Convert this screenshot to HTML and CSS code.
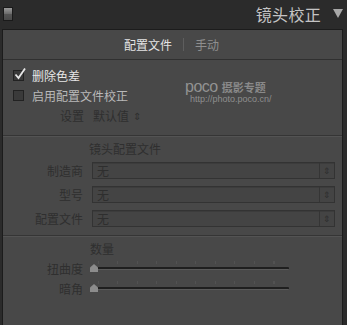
FILE: index.html
```html
<!DOCTYPE html>
<html>
<head>
<meta charset="utf-8">
<link rel="stylesheet" href="styles.css">
</head>
<body>
<div class="header">
  <div class="hicon"></div>
  <div class="htitle">镜头校正</div>
  <svg class="tri" width="10" height="9" viewBox="0 0 10 9"><polygon points="0,0 10,0 5,9" fill="#a8a8a8"/></svg>
</div>
<div class="panel">
  <div class="tabs">
    <span class="tab active">配置文件</span>
    <span class="tsep"></span>
    <span class="tab">手动</span>
  </div>
  <div class="sect1">
    <div class="chk"><span class="box"><svg width="12" height="12" viewBox="0 0 12 12"><path d="M1.5 6.5 L4.5 10 L11 0.5" fill="none" stroke="#e6e6e6" stroke-width="1.8"/></svg></span><span class="ctext on">删除色差</span></div>
    <div class="chk"><span class="box"></span><span class="ctext">启用配置文件校正</span></div>
    <div class="setting"><span class="dim">设置</span><span class="dim val">默认值</span><span class="arr">⇕</span></div>
    <div class="wm"><div class="wmtop"><span class="poco">poco</span><span class="wmcn">摄影专题</span></div><div class="url">http://photo.poco.cn/</div></div>
  </div>
  <div class="sect2">
    <div class="shead">镜头配置文件</div>
    <div class="frow"><span class="flabel">制造商</span><div class="sel"><span class="sv">无</span><span class="sarr">⇕</span></div></div>
    <div class="frow"><span class="flabel">型号</span><div class="sel"><span class="sv">无</span><span class="sarr">⇕</span></div></div>
    <div class="frow"><span class="flabel">配置文件</span><div class="sel"><span class="sv">无</span><span class="sarr">⇕</span></div></div>
  </div>
  <div class="sect3">
    <div class="shead">数量</div>
    <div class="srow"><span class="flabel">扭曲度</span><div class="slider"><div class="ticks"></div><div class="track"></div><div class="thumb"></div></div></div>
    <div class="srow"><span class="flabel">暗角</span><div class="slider"><div class="ticks"></div><div class="track"></div><div class="thumb"></div></div></div>
  </div>
</div>
</body>
</html>
```
FILE: styles.css
```css
html, body { margin: 0; padding: 0; }
body {
  width: 347px; height: 325px; overflow: hidden;
  background: #2b2b2b;
  font-family: "Noto Sans CJK SC", "Noto Sans", sans-serif;
  font-size: 12px;
  display: flex; flex-direction: column;
}
.header {
  height: 29px; flex: none;
  display: flex; align-items: center;
  padding: 0 4px 0 3px;
}
.hicon {
  width: 8px; height: 12px;
  border: 1px solid #1a1a1a;
  background: linear-gradient(#9a9a9a, #6a6a6a 50%, #555 51%, #4a4a4a);
  margin-right: auto;
  margin-top: -2px;
}
.htitle { color: #c4c4c4; font-size: 16px; letter-spacing: 0.3px; margin-right: 12px; margin-top: -2px; }
.tri { margin-top: -2px; }
.panel {
  flex: 1;
  margin: 0 4px 0 2px;
  border: 1px solid #1c1c1c;
  border-bottom: none;
  background: #484848;
  display: flex; flex-direction: column;
}
.tabs {
  height: 29px; flex: none;
  display: flex; align-items: center; justify-content: center;
  gap: 11px;
  border-bottom: 1px solid #303030;
  padding-right: 2px;
}
.tab { color: #8f8f8f; font-size: 12px; }
.tab.active { color: #e4e4e4; }
.tsep { width: 1px; height: 13px; background: #5e5e5e; }
.sect1 {
  position: relative;
  padding: 5px 0 10px 10px;
  border-bottom: 1px solid #353535;
  box-shadow: 0 1px 0 #535353;
}
.chk { display: flex; align-items: center; height: 20px; gap: 8px; }
.box {
  width: 9px; height: 9px; border: 1px solid #222; background: #3a3a3a;
  position: relative;
}
.box svg { position: absolute; left: 0; top: -3px; }
.ctext { color: #b9b9b9; }
.ctext.on { color: #e6e6e6; }
.setting { display: flex; align-items: center; height: 20px; padding-left: 47px; gap: 9px; }
.dim { color: #2f2f2f; }
.arr { color: #2f2f2f; font-size: 10px; margin-left: -5px; }
.wm {
  position: absolute; left: 182px; top: 19px;
  color: #8a8a8a;
}
.wmtop { display: flex; align-items: baseline; height: 15px; line-height: 15px; }
.poco { font-family: "Liberation Sans", sans-serif; font-size: 16px; letter-spacing: -0.5px; color: #929292; }
.wmcn { font-size: 11px; font-weight: bold; color: #8a8a8a; margin-left: 4px; }
.url { font-family: "Liberation Sans", sans-serif; font-size: 9px; line-height: 10px; color: #8e8e8e; padding-left: 5px; }
.sect2 {
  padding: 4px 0 5px 0;
  border-bottom: 1px solid #353535;
  box-shadow: 0 1px 0 #535353;
}
.shead { color: #2f2f2f; padding-left: 86px; height: 18px; line-height: 18px; }
.frow { display: flex; align-items: center; height: 24px; }
.flabel { width: 80px; text-align: right; color: #2f2f2f; margin-right: 9px; flex: none; }
.sel {
  width: 241px; height: 15px;
  border: 1px solid #333;
  background: #444;
  display: flex; align-items: center;
  box-shadow: inset 0 1px 0 #3c3c3c;
}
.sv { flex: 1; color: #2e2e2e; padding-left: 4px; line-height: 15px; }
.sarr { width: 14px; border-left: 1px solid #353535; height: 15px; line-height: 15px; text-align: center; color: #2e2e2e; font-size: 9px; }
.sect3 { padding: 4px 0 0 0; }
.sect3 .shead { padding-left: 87px; }
.srow { display: flex; align-items: center; height: 20px; }
.slider { position: relative; width: 199px; height: 10px; margin-left: -2px; }
.track {
  position: absolute; left: 0; right: 0; top: 4px; height: 2px;
  background: #1f1f1f; border-bottom: 1px solid #5a5a5a; border-radius: 1px;
}
.ticks {
  position: absolute; left: 8px; right: 0; top: -2px; height: 3px;
  background: repeating-linear-gradient(90deg, #525252 0 1px, transparent 1px 19.5px);
}
.thumb {
  position: absolute; left: 0; top: 1px;
  width: 8px; height: 8px;
  background: #8c8c8c;
  clip-path: polygon(50% 0, 100% 45%, 100% 100%, 0 100%, 0 45%);
}
```
